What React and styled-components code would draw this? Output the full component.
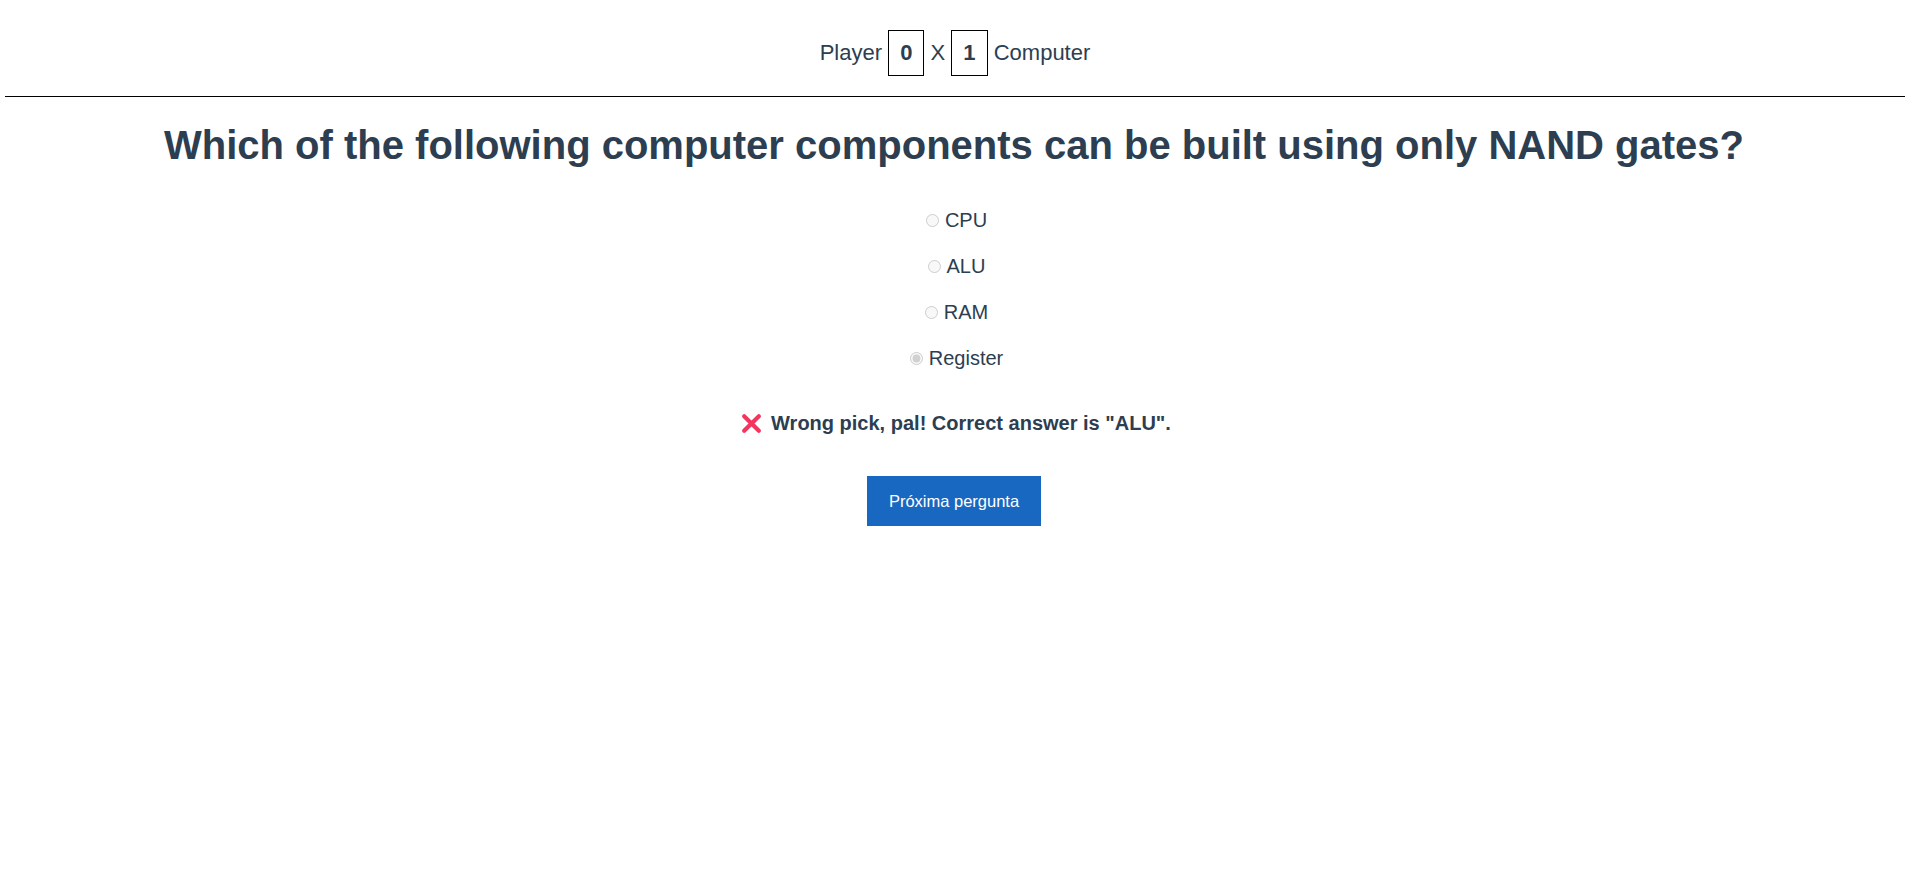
import React from 'react'
import styled, { createGlobalStyle } from 'styled-components'

const GlobalStyle = createGlobalStyle`
  html, body {
    margin: 0;
    padding: 0;
    background: #fff;
  }
  body {
    font-family: 'Liberation Sans', Arial, Helvetica, sans-serif;
    color: #2c3e50;
  }
`

const options = ['CPU', 'ALU', 'RAM', 'Register']
const picked = 'Register'

const CrossIcon = () => (
  <svg width="21" height="21" viewBox="0 0 20 20" aria-hidden="true">
    <path
      d="M3 3 L17 17 M17 3 L3 17"
      stroke="#f2365f"
      strokeWidth="4"
      strokeLinecap="round"
      fill="none"
    />
  </svg>
)

const App = () => {
  return (
    <Page>
      <GlobalStyle />
      <Scoreboard>
        Player <Score>0</Score> X <Score>1</Score> Computer
      </Scoreboard>
      <Quiz>
        <Question>
          Which of the following computer components can be built using only
          NAND gates?
        </Question>
        <OptionList>
          {options.map((opt) => (
            <Option key={opt}>
              <input
                type="radio"
                name="answer"
                value={opt}
                disabled
                defaultChecked={opt === picked}
              />
              {opt}
            </Option>
          ))}
        </OptionList>
        <Feedback>
          <CrossIcon />
          <span>Wrong pick, pal! Correct answer is "ALU".</span>
        </Feedback>
        <NextButton type="button">Próxima pergunta</NextButton>
      </Quiz>
    </Page>
  )
}

const Page = styled.div`
  min-height: 885px;
`

const Scoreboard = styled.header`
  margin-left: 5px;
  padding: 30px 0 20px;
  border-bottom: 1px solid #000;
  text-align: center;
  font-size: 22px;
  line-height: 24px;
  color: #2c3e50;
`

const Score = styled.span`
  display: inline-block;
  padding: 10px 11px;
  border: 1px solid #000;
  font-weight: 700;
  line-height: 24px;
`

const Quiz = styled.main`
  display: flex;
  flex-direction: column;
  align-items: center;
  padding-left: 3px;
`

const Question = styled.h1`
  margin: 26px 0 0;
  font-size: 40px;
  font-weight: 700;
  text-align: center;
  color: #2c3e50;
`

const OptionList = styled.div`
  margin-top: 41px;
  display: flex;
  flex-direction: column;
  align-items: center;
  gap: 23px;
`

const Option = styled.label`
  display: flex;
  align-items: center;
  font-size: 20px;
  color: #2c3e50;

  input {
    width: 13px;
    height: 13px;
    margin: 0 6px 0 5px;
  }
`

const Feedback = styled.p`
  margin: 42px 0 0;
  padding-left: 4px;
  display: flex;
  align-items: center;
  gap: 9px;
  font-size: 20px;
  font-weight: 700;
  color: #2c3e50;
`

const NextButton = styled.button`
  margin-top: 41px;
  height: 50px;
  padding: 0 22px;
  border: none;
  background: #1867c0;
  color: #fff;
  font-family: inherit;
  font-size: 16.5px;
  cursor: pointer;
`

export default App
